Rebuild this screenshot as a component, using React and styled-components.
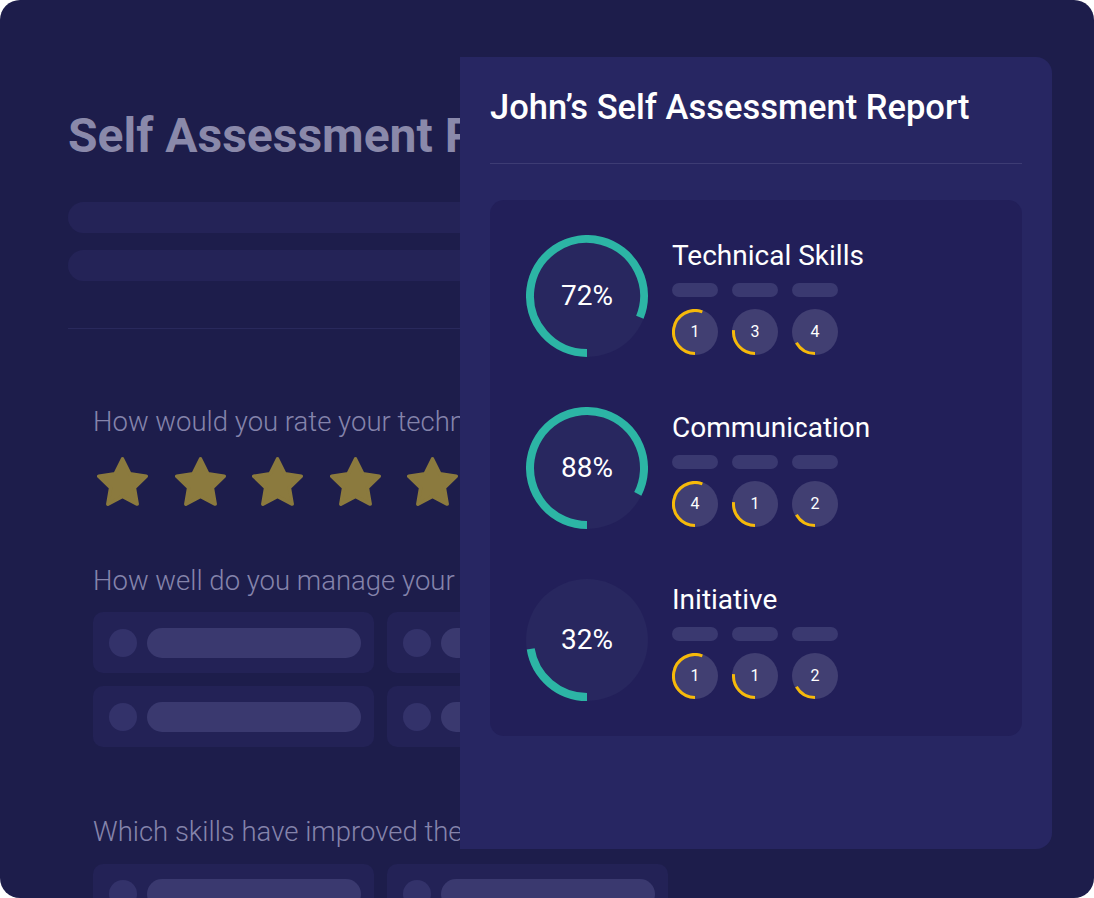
import React from "react";
import styled, { createGlobalStyle } from "styled-components";

const GlobalStyle = createGlobalStyle`
  html, body {
    margin: 0;
    padding: 0;
    background: #ffffff;
  }
  body {
    font-family: Roboto, "Liberation Sans", sans-serif;
  }
`;

const Frame = styled.div`
  position: relative;
  width: 1094px;
  height: 898px;
  box-sizing: border-box;
  padding: 112px 68px 0 68px;
  background: #1d1d4b;
  border-radius: 20px;
  overflow: hidden;
`;

const PageTitle = styled.h1`
  margin: 0;
  font-size: 48px;
  line-height: 48px;
  font-weight: 700;
  color: #8a89aa;
  white-space: nowrap;
`;

const Bars = styled.div`
  display: flex;
  flex-direction: column;
  gap: 17px;
  margin-top: 42px;
`;

const Bar = styled.div`
  height: 31px;
  border-radius: 16px;
  background: #242357;
`;

const Rule = styled.hr`
  margin: ${(p) => p.$top || 0}px 0 0;
  border: 0;
  height: 1px;
  background: ${(p) => p.$color || "#29295c"};
`;

const Questions = styled.div`
  padding-left: 25px;
`;

const Question = styled.p`
  margin: ${(p) => p.$top}px 0 0;
  font-size: 27.5px;
  line-height: 27.5px;
  font-weight: 300;
  color: #8584ab;
  white-space: nowrap;
`;

const Stars = styled.div`
  display: flex;
  gap: 26.5px;
  margin: 21px 0 0 4px;
`;

const Options = styled.div`
  display: grid;
  grid-template-columns: 281px 281px;
  grid-auto-rows: 61px;
  gap: 13px;
  margin-top: 18px;
`;

const Option = styled.div`
  display: flex;
  align-items: center;
  gap: 10px;
  padding: 0 13px 0 16px;
  border-radius: 10px;
  background: #232256;
`;

const OptionDot = styled.span`
  width: 28px;
  height: 28px;
  flex: none;
  border-radius: 50%;
  background: #33326a;
`;

const OptionPill = styled.span`
  flex: 1;
  height: 30px;
  border-radius: 15px;
  background: #3a396f;
`;

/* report panel that sits over the form */
const Panel = styled.section`
  position: absolute;
  left: 460px;
  top: 57px;
  width: 592px;
  height: 792px;
  box-sizing: border-box;
  padding: 33px 30px 0;
  background: #272662;
  border-radius: 0 16px 16px 0;
`;

const PanelTitle = styled.h2`
  margin: 0;
  font-size: 34.5px;
  line-height: 34px;
  font-weight: 500;
  color: #ffffff;
  white-space: nowrap;
`;

const ResultCard = styled.div`
  display: flex;
  flex-direction: column;
  gap: 50px;
  margin-top: 36px;
  padding: 35px 36px;
  border-radius: 14px;
  background: #221f59;
`;

const SkillRow = styled.div`
  display: flex;
  align-items: flex-start;
  gap: 24px;
`;

const Stack = styled.div`
  display: grid;
  place-items: center;
  flex: none;
  & > * {
    grid-area: 1 / 1;
  }
`;

const Percent = styled.span`
  font-size: 28px;
  line-height: 28px;
  font-weight: 400;
  color: #ffffff;
`;

const SkillInfo = styled.div`
  display: flex;
  flex-direction: column;
  margin-top: 7px;
`;

const SkillName = styled.h3`
  margin: 0;
  font-size: 28px;
  line-height: 28px;
  font-weight: 400;
  color: #ffffff;
  white-space: nowrap;
`;

const Chips = styled.div`
  display: flex;
  gap: 14px;
  margin-top: ${(p) => p.$top}px;
`;

const Chip = styled.span`
  width: 46px;
  height: 14px;
  border-radius: 7px;
  background: #3a3970;
`;

const Score = styled.span`
  font-size: 16px;
  line-height: 16px;
  color: #ffffff;
`;

const arcPath = (cx, cy, r, deg) => {
  const a = (deg * Math.PI) / 180;
  const x = cx - r * Math.sin(a);
  const y = cy + r * Math.cos(a);
  const large = deg > 180 ? 1 : 0;
  return `M ${cx} ${cy + r} A ${r} ${r} 0 ${large} 1 ${x.toFixed(2)} ${y.toFixed(2)}`;
};

const Star = () => (
  <svg width="51" height="49" viewBox="1.25 1.25 21.5 20.5">
    <polygon
      points="12,2 15.09,8.26 22,9.27 17,14.14 18.18,21.02 12,17.77 5.82,21.02 7,14.14 2,9.27 8.91,8.26"
      fill="#8b7a3e"
      stroke="#8b7a3e"
      strokeWidth="1.5"
      strokeLinejoin="round"
    />
  </svg>
);

const Gauge = ({ pct, sweep }) => (
  <Stack>
    <svg width="122" height="122" viewBox="0 0 122 122">
      <circle cx="61" cy="61" r="61" fill="#28275f" />
      <path d={arcPath(61, 61, 57, sweep)} fill="none" stroke="#2cb5a5" strokeWidth="8" />
    </svg>
    <Percent>{pct}%</Percent>
  </Stack>
);

const Ring = ({ value, sweep }) => (
  <Stack>
    <svg width="46" height="46" viewBox="0 0 46 46">
      <circle cx="23" cy="23" r="23" fill="#413f72" />
      <path d={arcPath(23, 23, 21.5, sweep)} fill="none" stroke="#f6b90a" strokeWidth="3" />
    </svg>
    <Score>{value}</Score>
  </Stack>
);

const skills = [
  { name: "Technical Skills", pct: 72, sweep: 292, scores: [1, 3, 4] },
  { name: "Communication", pct: 88, sweep: 297, scores: [4, 1, 2] },
  { name: "Initiative", pct: 32, sweep: 81, scores: [1, 1, 2] },
];

const ringSweeps = [200, 95, 60];

const OptionGrid = ({ count }) => (
  <Options>
    {Array.from({ length: count }).map((_, i) => (
      <Option key={i}>
        <OptionDot />
        <OptionPill />
      </Option>
    ))}
  </Options>
);

const App = () => {
  return (
    <>
      <GlobalStyle />
      <Frame>
        <PageTitle>Self Assessment Report</PageTitle>
        <Bars>
          <Bar />
          <Bar />
        </Bars>
        <Rule $top={47} />

        <Questions>
          <Question $top={79}>How would you rate your technical skills?</Question>
          <Stars>
            {[0, 1, 2, 3, 4].map((i) => (
              <Star key={i} />
            ))}
          </Stars>

          <Question $top={61}>How well do you manage your time?</Question>
          <OptionGrid count={4} />

          <Question $top={71}>Which skills have improved the most?</Question>
          <OptionGrid count={2} />
        </Questions>

        <Panel>
          <PanelTitle>John’s Self Assessment Report</PanelTitle>
          <Rule $top={39} $color="#3d3c74" />
          <ResultCard>
            {skills.map((s) => (
              <SkillRow key={s.name}>
                <Gauge pct={s.pct} sweep={s.sweep} />
                <SkillInfo>
                  <SkillName>{s.name}</SkillName>
                  <Chips $top={13}>
                    {s.scores.map((_, i) => (
                      <Chip key={i} />
                    ))}
                  </Chips>
                  <Chips $top={12}>
                    {s.scores.map((v, i) => (
                      <Ring key={i} value={v} sweep={ringSweeps[i]} />
                    ))}
                  </Chips>
                </SkillInfo>
              </SkillRow>
            ))}
          </ResultCard>
        </Panel>
      </Frame>
    </>
  );
};

export default App;
